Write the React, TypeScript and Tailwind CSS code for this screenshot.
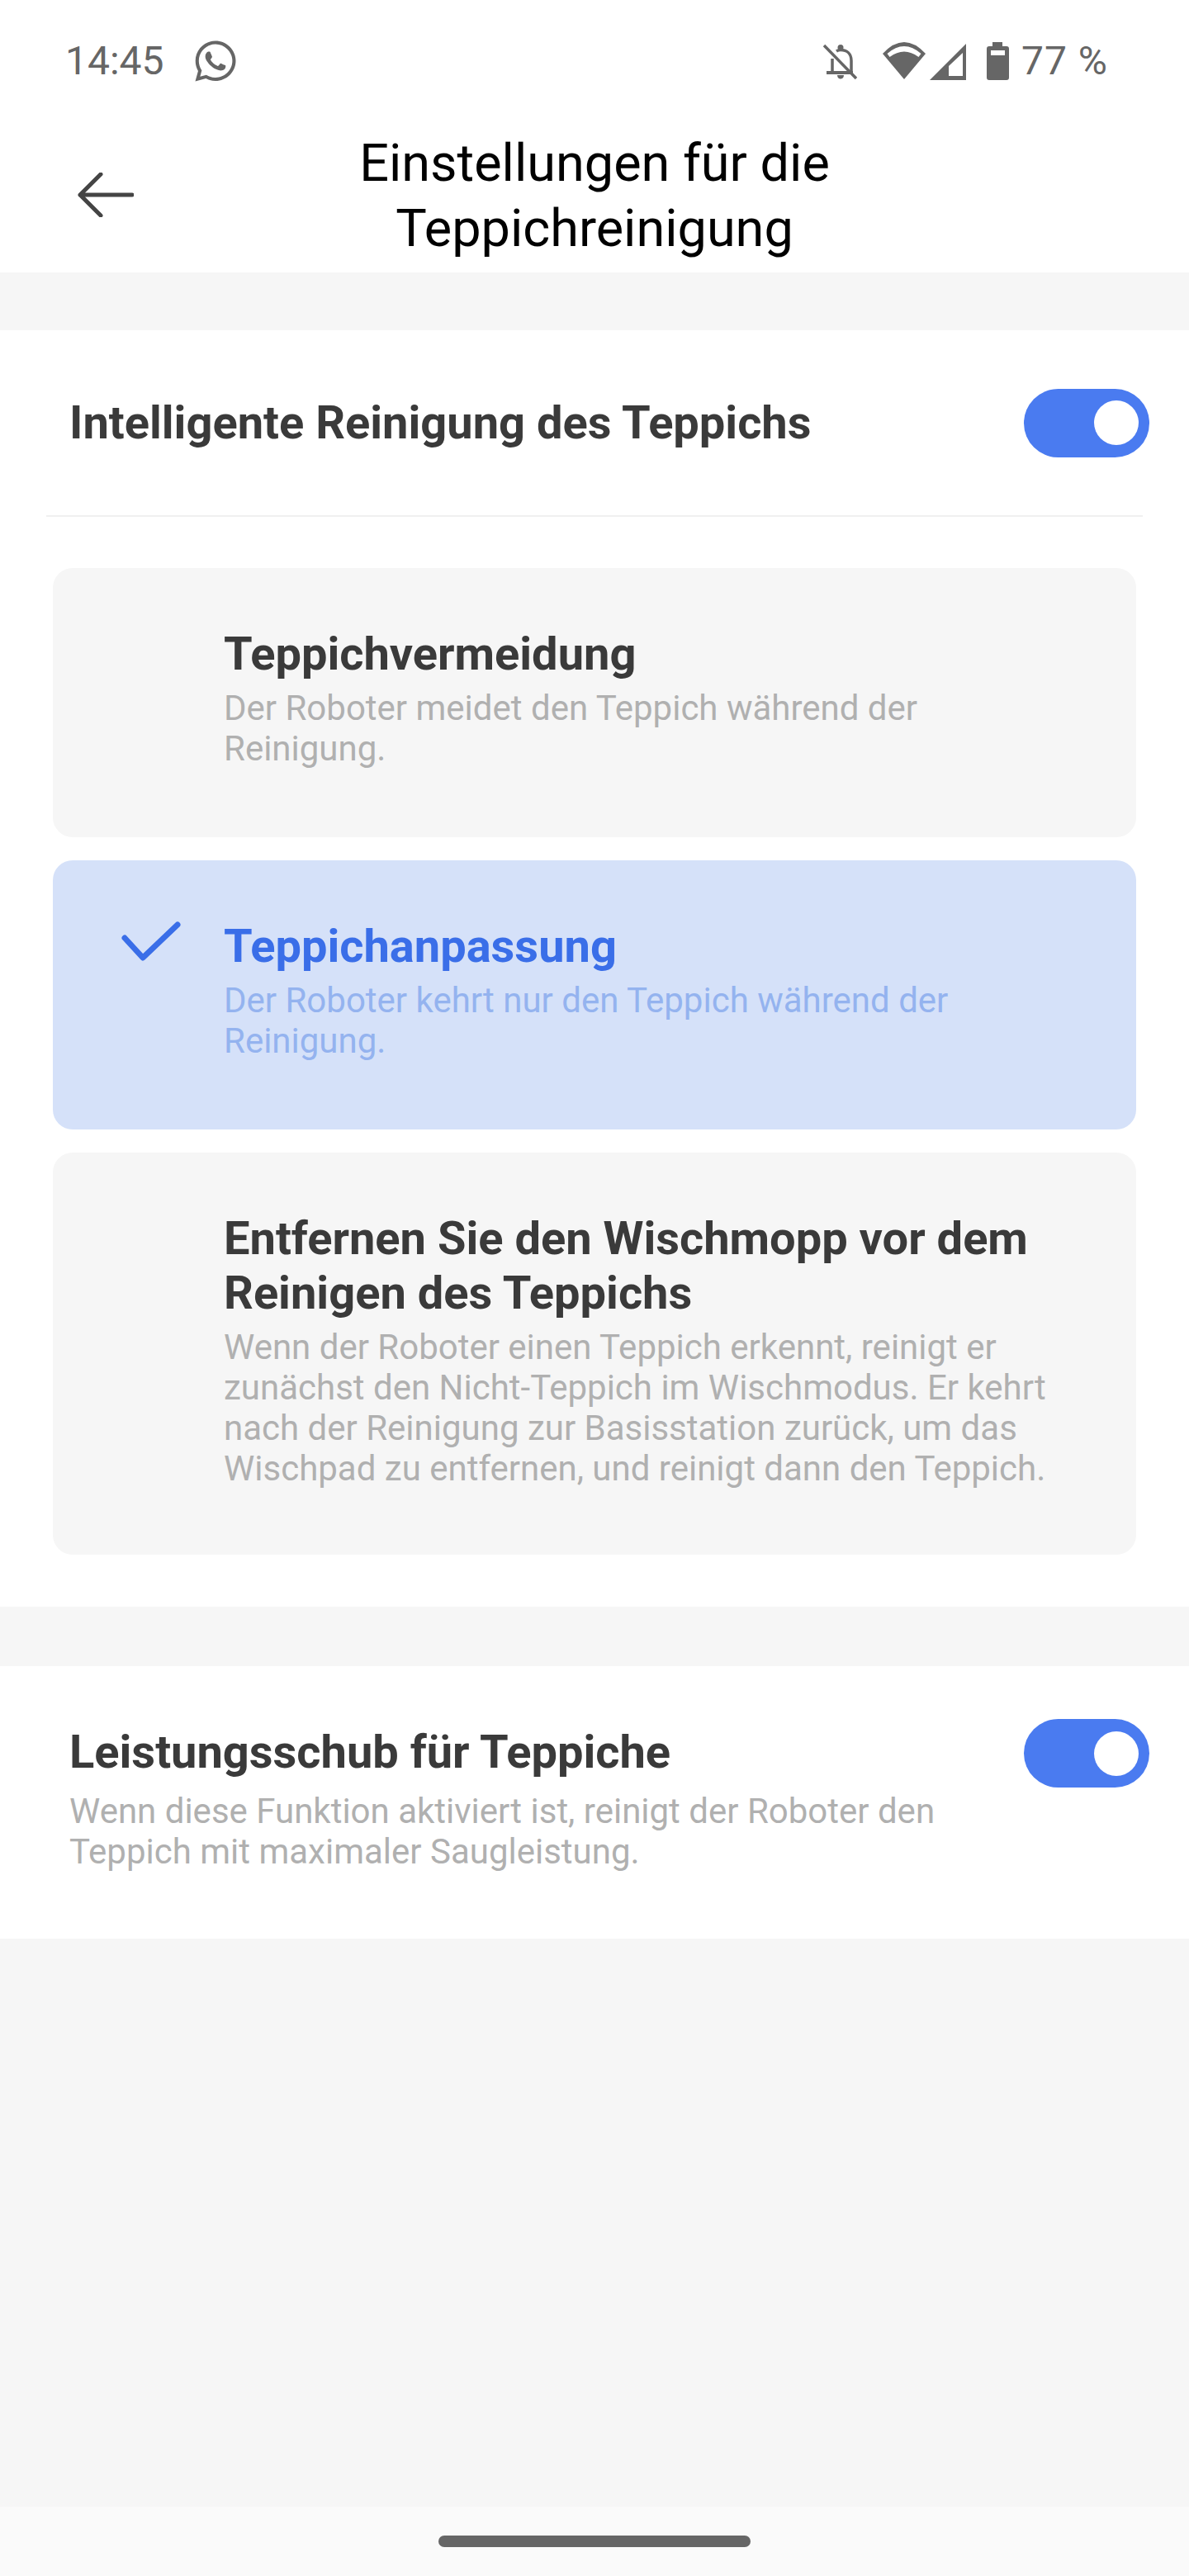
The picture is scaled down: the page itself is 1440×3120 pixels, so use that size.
import { FaWhatsapp } from "react-icons/fa";

const Toggle = () => (
  <div className="w-[152px] h-[83px] rounded-full bg-[#4a7bf0] flex items-center justify-end pr-[13px] shrink-0">
    <div className="w-[54px] h-[54px] rounded-full bg-white" />
  </div>
);

const StatusBar = () => (
  <div className="h-[146px] flex items-start justify-between pl-[79px] pr-[98px] pt-[49px] text-[#666666]">
    <div className="flex items-center gap-[34px] h-[49px]">
      <span className="text-[48px] leading-[49px] font-[450]">14:45</span>
      <FaWhatsapp className="w-[56px] h-[56px]" />
    </div>
    <div className="flex items-center h-[49px]">
      <svg viewBox="0 0 42 44" className="w-[42px] h-[44px] mr-[31px] mt-[3px]" fill="none" stroke="currentColor" strokeWidth="3.5">
        <path d="M12 34V18M17 9c1.500-1 3-1.500 5-1.500 8 0 13 5 13 13V34" />
        <path d="M5 35h32" strokeWidth="4" />
        <path d="M18 38c0 6 8 6 8 0z" fill="currentColor" stroke="none" />
        <circle cx="22" cy="4.500" r="3.500" fill="currentColor" stroke="none" />
        <path d="M2 2l39 40" />
      </svg>
      <svg viewBox="0 0 52 46" className="w-[52px] h-[46px] mr-[5px] mt-[1px]">
        <path d="M26 45 0 14Q26-14 52 14z" fill="currentColor" />
        <path d="M5.500 14Q26-4 46.500 14L43.500 18Q26 5 8.500 18z" fill="#ffffff" />
      </svg>
      <svg viewBox="0 0 44 44" className="w-[44px] h-[44px] mr-[25px] mt-[3px]">
        <path d="M44 0v44H0z" fill="currentColor" />
        <path d="M40 11v28H23V27z" fill="#ffffff" />
      </svg>
      <svg viewBox="0 0 27 46" className="w-[27px] h-[46px] mr-[15px] mt-[1px]">
        <path d="M7 0h12v5h5c2 0 3 1 3 3v35c0 2-1 3-3 3H3c-2 0-3-1-3-3V8c0-2 1-3 3-3h4z" fill="currentColor" />
        <rect x="5" y="10" width="17" height="6" fill="#ffffff" />
      </svg>
      <span className="text-[48px] leading-[49px] tracking-[1px]">77 %</span>
    </div>
  </div>
);

const Header = () => (
  <div className="h-[184px] relative flex justify-center">
    <svg viewBox="0 0 68 54" className="absolute left-[94px] top-[63px] w-[68px] h-[54px]" fill="none" stroke="#444444" strokeWidth="5" strokeLinecap="round" strokeLinejoin="round">
      <path d="M66 27H3M28 2 3 27l25 25" />
    </svg>
    <h1 className="text-[63px] leading-[79px] text-black text-center font-normal w-[720px] mt-[12px]">
      Einstellungen für die Teppichreinigung
    </h1>
  </div>
);

type OptionProps = {
  title: string;
  text: string;
  selected?: boolean;
};

const Option = ({ title, text, selected }: OptionProps) => (
  <div className={`relative rounded-[24px] min-h-[326px] pl-[207px] pr-[90px] pt-[71px] pb-[80px] ${selected ? "bg-[#d5e1f9]" : "bg-[#f6f6f6]"}`}>
    {selected && (
      <svg viewBox="0 0 72 49" className="absolute left-[83px] top-[74px] w-[72px] h-[49px]" fill="none" stroke="#3a6ee8" strokeWidth="7" strokeLinecap="round" strokeLinejoin="round">
        <path d="M4 20 26 44 68 4" />
      </svg>
    )}
    <div className={`text-[56px] leading-[66px] font-bold ${selected ? "text-[#3a6ee8]" : "text-[#3a3a3a]"}`}>{title}</div>
    <div className={`text-[42px] leading-[49px] mt-[8px] ${selected ? "text-[#94b3ef]" : "text-[#b0b0b0]"}`}>{text}</div>
  </div>
);

export default function App() {
  return (
    <div className="w-[1440px] h-[3120px] bg-[#f6f6f6] flex flex-col font-['Roboto',sans-serif]">
      <div className="bg-white">
        <StatusBar />
        <Header />
      </div>

      <section className="mt-[70px] bg-white pb-[63px]">
        <div className="mx-[56px] h-[226px] border-b-2 border-[#f0f0f0] flex items-center justify-between">
          <div className="text-[56px] font-bold text-[#3a3a3a] pl-[28px]">Intelligente Reinigung des Teppichs</div>
          <div className="-mr-[8px]"><Toggle /></div>
        </div>
        <div className="mx-[64px] mt-[62px] flex flex-col gap-[28px]">
          <Option title="Teppichvermeidung" text="Der Roboter meidet den Teppich während der Reinigung." />
          <Option selected title="Teppichanpassung" text="Der Roboter kehrt nur den Teppich während der Reinigung." />
          <Option title="Entfernen Sie den Wischmopp vor dem Reinigen des Teppichs" text="Wenn der Roboter einen Teppich erkennt, reinigt er zunächst den Nicht-Teppich im Wischmodus. Er kehrt nach der Reinigung zur Basisstation zurück, um das Wischpad zu entfernen, und reinigt dann den Teppich." />
        </div>
      </section>

      <section className="mt-[72px] bg-white h-[330px] pl-[84px] pr-[48px] pt-[64px] flex justify-between">
        <div className="w-[1100px] pt-[7px]">
          <div className="text-[56px] leading-[66px] font-bold text-[#3a3a3a]">Leistungsschub für Teppiche</div>
          <div className="text-[42px] leading-[49px] text-[#b0b0b0] mt-[14px]">Wenn diese Funktion aktiviert ist, reinigt der Roboter den Teppich mit maximaler Saugleistung.</div>
        </div>
        <Toggle />
      </section>

      <div className="flex-1" />
      <div className="h-[84px] bg-[#fafafa] flex justify-center items-center">
        <div className="w-[378px] h-[14px] rounded-full bg-[#666666]" />
      </div>
    </div>
  );
}
